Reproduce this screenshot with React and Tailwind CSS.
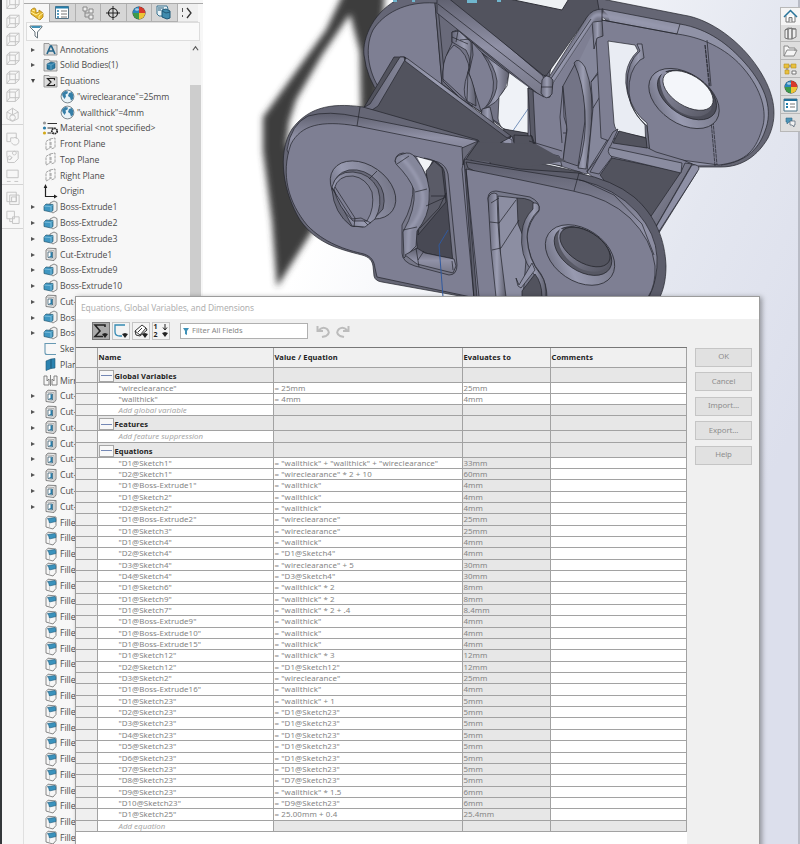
import React from "react";

const treeItems = [
  ["folderA", "Annotations", 1],
  ["folderB", "Solid Bodies(1)", 1],
  ["folderS", "Equations", 2],
  ["globe", '"wireclearance"=25mm', 0],
  ["globe", '"wallthick"=4mm', 0],
  ["material", "Material <not specified>", 0],
  ["plane", "Front Plane", 0],
  ["plane", "Top Plane", 0],
  ["plane", "Right Plane", 0],
  ["origin", "Origin", 0],
  ["boss", "Boss-Extrude1", 1],
  ["boss", "Boss-Extrude2", 1],
  ["boss", "Boss-Extrude3", 1],
  ["cut", "Cut-Extrude1", 1],
  ["boss", "Boss-Extrude9", 1],
  ["boss", "Boss-Extrude10", 1],
  ["cut", "Cut-", 1],
  ["boss", "Bos", 1],
  ["boss", "Bos", 1],
  ["sketch", "Ske", 0],
  ["refplane", "Plan", 0],
  ["mirror", "Mirr", 0],
  ...Array.from({ length: 8 }, () => ["cut", "Cut-", 1]),
  ...Array.from({ length: 21 }, () => ["fillet", "Fille", 0]),
];

const W = '= "wallthick"';
const S23 = '= "D1@Sketch23"';
const equations = [
  ["D1@Sketch1", '= "wallthick" + "wallthick" + "wireclearance"', "33mm"],
  ["D2@Sketch1", '= "wireclearance" * 2 + 10', "60mm"],
  ["D1@Boss-Extrude1", W, "4mm"],
  ["D1@Sketch2", W, "4mm"],
  ["D2@Sketch2", W, "4mm"],
  ["D1@Boss-Extrude2", '= "wireclearance"', "25mm"],
  ["D1@Sketch3", '= "wireclearance"', "25mm"],
  ["D1@Sketch4", W, "4mm"],
  ["D2@Sketch4", '= "D1@Sketch4"', "4mm"],
  ["D3@Sketch4", '= "wireclearance" + 5', "30mm"],
  ["D4@Sketch4", '= "D3@Sketch4"', "30mm"],
  ["D1@Sketch6", W + " * 2", "8mm"],
  ["D1@Sketch9", W + " * 2", "8mm"],
  ["D1@Sketch7", W + " * 2 + .4", "8.4mm"],
  ["D1@Boss-Extrude9", W, "4mm"],
  ["D1@Boss-Extrude10", W, "4mm"],
  ["D1@Boss-Extrude15", W, "4mm"],
  ["D1@Sketch12", W + " * 3", "12mm"],
  ["D2@Sketch12", '= "D1@Sketch12"', "12mm"],
  ["D3@Sketch2", '= "wireclearance"', "25mm"],
  ["D1@Boss-Extrude16", W, "4mm"],
  ["D1@Sketch23", W + " + 1", "5mm"],
  ["D2@Sketch23", S23, "5mm"],
  ["D3@Sketch23", S23, "5mm"],
  ["D4@Sketch23", S23, "5mm"],
  ["D5@Sketch23", S23, "5mm"],
  ["D6@Sketch23", S23, "5mm"],
  ["D7@Sketch23", S23, "5mm"],
  ["D8@Sketch23", '= "D7@Sketch23"', "5mm"],
  ["D9@Sketch23", W + " * 1.5", "6mm"],
  ["D10@Sketch23", '= "D9@Sketch23"', "6mm"],
  ["D1@Sketch25", "= 25.00mm + 0.4", "25.4mm"],
];

function Folder({ children }) {
  return (
    <>
      <path d="M1 3V1.500h5L7 3h7v10H1z" fill="#dcdcdc" stroke="#858585" strokeWidth=".8" />
      {children}
    </>
  );
}

function TreeIcon({ kind }) {
  let art = null;
  if (kind === "folderA")
    art = <Folder><path d="M4 12 7.400 4h1L12 12M5.500 9h5" fill="none" stroke="#24658a" strokeWidth="1.700" /></Folder>;
  if (kind === "folderB")
    art = <Folder><path d="m4 6 4-2 4 1v5l-4 2-4-1z" fill="#2c7ca5" stroke="#174e6d" strokeWidth=".6" /><path d="m4 6 4 1 4-2M8 7v5" stroke="#83bcda" strokeWidth=".6" fill="none" /></Folder>;
  if (kind === "folderS")
    art = <Folder><path d="M11.500 6.200V4.500H4.500l3.500 3.500-3.500 3.500h7V10" fill="none" stroke="#222" strokeWidth="1.200" /></Folder>;
  if (kind === "globe")
    art = (
      <>
        <circle cx="7.500" cy="7.500" r="6.400" fill="#e9f3f8" stroke="#606d75" strokeWidth=".8" />
        <path d="M2 4.500 5 2l3 .5-.5 2-2 1 .5 2-1.500 2.500L2.500 7zM9 4l3-1 1.500 3.500L13 10l-2 1.500-1-3-2-1.500z" fill="#367fa8" />
      </>
    );
  if (kind === "material")
    art = (
      <>
        <circle cx="1.500" cy="2" r="1.600" fill="#999" />
        <circle cx="1.500" cy="7" r="1.600" fill="#2b7ca8" />
        <circle cx="1.500" cy="12" r="1.600" fill="#d3a91b" />
        <path d="M4.500 2.500H14M4.500 7h6M4.500 12h4" stroke="#333" strokeWidth="1.200" />
        <circle cx="11.500" cy="10" r="2.700" fill="none" stroke="#222" strokeWidth="1.800" strokeDasharray="1.700 .7" />
      </>
    );
  if (kind === "plane")
    art = <path d="m3 4.500 4-2.500v9L3 13zM7 2l5-1v9.500L8 12M8 5v6" fill="#fafafa" stroke="#8b8b8b" strokeWidth=".8" strokeDasharray="3 .8" />;
  if (kind === "origin")
    art = (
      <>
        <path d="M2.500 2v10.500H13" fill="none" stroke="#222" strokeWidth="1.200" />
        <path d="M.7 4 2.500 0l1.800 4zM11 10.500l3.500 2-3.500 2z" fill="#222" />
      </>
    );
  if (kind === "boss")
    art = (
      <>
        <path d="m7 3 4-2 3 1.500v8L10 13l-3-2z" fill="#f0f0f0" stroke="#707070" strokeWidth=".8" />
        <path d="m1 6 2-2 7 .5v6L8 12l-7-1.500z" fill="#3f97c2" stroke="#24566f" strokeWidth=".7" />
        <path d="m1 6 7 .7 2-2.200M8 7v5" fill="none" stroke="#92c9e3" strokeWidth=".7" />
      </>
    );
  if (kind === "cut")
    art = (
      <>
        <path d="m3 3 2-1.800 8 .3v9.500l-2 2.500-8-1z" fill="#ececec" stroke="#777" strokeWidth=".9" />
        <path d="m3 3 8 .6 2-2.100M11 4v9" stroke="#999" strokeWidth=".7" fill="none" />
        <path d="M5 5h4.500v6L5 10.500z" fill="#fff" stroke="#294e62" strokeWidth=".7" />
        <path d="M7.500 5.300h1.800v5.200l-3.800-.5 2-1z" fill="#297da9" />
      </>
    );
  if (kind === "sketch")
    art = <path d="M13 1.500H2v9q0 2 2 2h9" fill="none" stroke="#6799b3" strokeWidth="1.100" />;
  if (kind === "refplane")
    art = <path d="m3 4 5-2v9.500l-5 2zM8 2l4-.5v9.500l-4 .5z" fill="#2c83b0" stroke="#1f5877" strokeWidth=".6" />;
  if (kind === "mirror")
    art = <path d="M1 3v9h5V6L4 8V3zM14 3v9H9V6l2 2V3zM7.500 2v11" fill="none" stroke="#777" strokeWidth=".9" />;
  if (kind === "fillet")
    art = (
      <>
        <path d="m3 3.500 2-2.300 8 .8v8.500L10 14l-7-2z" fill="#f6f6f6" stroke="#7c7c7c" strokeWidth=".9" />
        <path d="M4.500 3.500 12 2.500q1.200.5 1 4L6.500 8Q6 5 4.500 3.500z" fill="#3a92bd" stroke="#225a79" strokeWidth=".6" />
        <path d="M6.500 8.500v4" stroke="#bbb" strokeWidth=".7" />
      </>
    );
  return <svg className="h-[15px] w-[15px] shrink-0 overflow-visible" viewBox="0 0 15 15">{art}</svg>;
}

function LeftStrip() {
  const item = (d, i) => (
    <svg key={i} className="h-[18.700px] w-4 shrink-0" viewBox="0 0 17 17" fill="none" stroke="#c2c2c2" strokeWidth="1">
      <path d={d} />
    </svg>
  );
  return (
    <div className="flex h-[844px] w-[24px] shrink-0 border-l-2 border-[#34373a] bg-[#f7f7f7]">
      <div className="w-[22px] border-r border-[#e0e0e0]">
        <div className="-mt-[7px] flex h-[132px] flex-col items-center border-b border-[#d4d4d4]">
          {Array.from({ length: 6 }, (_, i) => item("M2 5h9v10H2zM2 5l3-3h10v9l-4 4M11 5l4-3M5 2v9h10M5 11l-3 4", i))}
          {item("M2 6l6-4 6 4v7l-6 3-6-3zM8 2v7m6-3-6 3-6-3M5 12a3 3 0 1 0 6 0 3 3 0 0 0-6 0", 8)}
        </div>
        <div className="flex h-[60px] flex-col items-center border-b border-[#d4d4d4] pt-1">
          {item("M2 3h10v6M2 3v9h4M7 13a4 4 0 1 0 2-5M9 8H6v4", 1)}
          {item("M2 6V2h12v8l-4 4H3zM5 11l3-3M5 11a2 2 0 1 0-.1 0M10 6a2 2 0 1 0-.1 0", 2)}
          {item("M2 3h12v8H2zM2 15h4m4 0h4", 3)}
        </div>
        <div className="flex h-[44px] flex-col items-center border-b border-[#d4d4d4] pt-1">
          {item("M2 2h10v10H2zM5 5h10v10H5zM7 7h5v5H7z", 1)}
          {item("M2 2h8v8H2zM8 8h7v7H8zM5 10v3h3", 2)}
        </div>
      </div>
    </div>
  );
}

function Wheel({ className }) {
  return (
    <svg className={className} viewBox="0 0 14 14">
      <circle cx="7" cy="7" r="6.500" fill="#333" />
      <path d="M7 7V.8A6.200 6.200 0 0 0 .8 7z" fill="#2985bd" />
      <path d="M7 7h6.200A6.200 6.200 0 0 0 7 .8z" fill="#d8392c" />
      <path d="M7 7v6.200A6.200 6.200 0 0 0 13.200 7z" fill="#edc437" />
      <path d="M7 7H.8A6.200 6.200 0 0 0 7 13.200z" fill="#3d9b4b" />
      <ellipse cx="5" cy="3.500" rx="2" ry="1.200" fill="#fff" opacity=".6" />
    </svg>
  );
}

function FeatureTree() {
  const tab = "flex h-[18px] w-[25.500px] items-center justify-center border-r border-b border-[#b0b0b0] bg-[#d6d6d6]";
  return (
    <div className="flex h-[844px] w-[179px] shrink-0 flex-col bg-[#f7f7f7]">
      <div className="mt-[3px] flex h-[19px] border-t border-[#aaa]">
        <div className="flex h-[19px] w-[26px] items-center justify-center border-r border-[#aaa]">
          <svg className="h-4 w-4" viewBox="0 0 16 16"><path d="M2 4q4-4 5 0v3l3-1v-2l4 3v4l-3 3-2-1-7-5z" fill="#e7b92f" stroke="#a77b13" strokeWidth=".8" /><path d="m2 6 5 3 3-2M10 13v-3l4-3M3 4l3 1" fill="none" stroke="#fff0a0" /></svg>
        </div>
        <div className={tab}>
          <svg className="h-[13px] w-[14px]" viewBox="0 0 14 13"><path d="M.5.500h13v12H.5z" fill="#fff" stroke="#527184" /><path d="M.5.500h13v2H.5z" fill="#247fac" /><path d="M2 5h2m-2 3h2m-2 3h2" stroke="#247fac" strokeWidth="1.500" /><path d="M6 5h6M6 8h6m-6 3h6" stroke="#777" /></svg>
        </div>
        <div className={tab}>
          <svg className="h-[14px] w-[14px]" viewBox="0 0 14 14" fill="#eee" stroke="#888"><path d="M2 1h4v4H2zM8 3h4v4H8zM8 9h4v4H8z" /><path d="M4 5v6h4M4 7h4" fill="none" /></svg>
        </div>
        <div className={tab}>
          <svg className="h-[14px] w-[14px]" viewBox="0 0 14 14" fill="none" stroke="#222"><circle cx="7" cy="7" r="4.500" strokeWidth="1.200" /><path d="M7 0v14M0 7h14" /></svg>
        </div>
        <div className={tab}><Wheel className="h-[14px] w-[14px]" /></div>
        <div className={tab}>
          <svg className="h-[15px] w-[16px]" viewBox="0 0 16 15"><path d="M1 1h10l1 3v7H3L1 9z" fill="#e8f3f8" stroke="#397290" /><path d="m6 5 4-1 4 2v7l-3 1-5-2z" fill="#408bad" stroke="#1d5878" /><path d="M2 3h6M2 5h3M6 6l4 2 4-1" fill="none" stroke="#235a77" /></svg>
        </div>
        <div className="flex h-[18px] w-[20px] items-center justify-center border-b border-[#ddd] bg-[#f0f0f0]">
          <svg className="h-3 w-3" viewBox="0 0 12 12"><path d="m5 1 4 5-4 5" fill="none" stroke="#333" strokeWidth="1.300" /><path d="M0 1v4m0 3v2" stroke="#222" strokeWidth="1.500" /></svg>
        </div>
      </div>
      <div className="ml-[2px] flex h-[19px] w-[174px] items-center border border-[#ddd] bg-[#fafafa] pl-0.5">
        <svg className="h-[15px] w-[14px]" viewBox="0 0 14 15"><path d="M1 2h12v1L8.500 8v6L6 12V8L1 3z" fill="#fff" stroke="#65737b" /><path d="M2 2h10l-1 2H3z" fill="#4291b5" /></svg>
      </div>
      <div className="flex h-[803px]">
        <div className="flex w-[166px] flex-col overflow-hidden pt-[.7px]">
          {treeItems.map(([kind, label, arrow], i) => (
            <div key={i} className="flex h-[15.770px] shrink-0 items-center">
              <div className="flex w-[18.500px] shrink-0 items-center pl-[6.500px]">
                {arrow === 1 && <div className="h-0 w-0 border-y-[2.500px] border-l-[4px] border-y-transparent border-l-[#555]" />}
                {arrow === 2 && <div className="h-0 w-0 border-x-[2.500px] border-t-[4px] border-x-transparent border-t-[#444]" />}
              </div>
              <div className={kind === "globe" ? "ml-[17px] flex items-center" : "flex items-center"}>
                <TreeIcon kind={kind} />
                <span className="ml-[2.500px] whitespace-nowrap pt-px font-['Open_Sans','Noto_Sans',sans-serif] text-[8.700px] leading-[15px] tracking-[-.09px] text-[#4c4c4c]">{label}</span>
              </div>
            </div>
          ))}
        </div>
        <div className="flex w-[11px] flex-col bg-[#f0f0f0]">
          <svg className="mx-auto mt-1 h-[7px] w-[7px]" viewBox="0 0 8 8"><path d="m1 6 3-4 3 4" fill="none" stroke="#555" strokeWidth="1.300" /></svg>
          <div className="mt-[33px] h-[230px] bg-[#cdcdcd]" />
        </div>
      </div>
    </div>
  );
}

const FACE = "#7e7f93";
const DARK = "#52535e";
const EDGE = "#23242b";

function Model() {
  const light = { fill: "none", stroke: "#9698ad", strokeLinecap: "round" };
  return (
    <svg className="block h-[297px] w-[597px]" viewBox="203 0 597 297">
      <defs>
        <filter id="soft" x="-20%" y="-20%" width="140%" height="140%"><feGaussianBlur stdDeviation="3.200" /></filter>
        <filter id="sheen" x="-20%" y="-20%" width="140%" height="140%"><feGaussianBlur stdDeviation="1.300" /></filter>
        <linearGradient id="rim" x1="0" y1="0" x2="0" y2="1"><stop offset="0" stopColor="#5e5f6e" /><stop offset=".5" stopColor="#9091a6" /><stop offset="1" stopColor="#777889" /></linearGradient>
        <linearGradient id="tube" x1="0" y1="0" x2="1" y2="0"><stop offset="0" stopColor="#676879" /><stop offset=".5" stopColor="#9c9eb3" /><stop offset="1" stopColor="#5d5e6c" /></linearGradient>
        <linearGradient id="bore" x1="0" y1="0" x2="1" y2="1"><stop offset="0" stopColor="#9193a8" /><stop offset=".45" stopColor="#777889" /><stop offset="1" stopColor="#555662" /></linearGradient>
        <linearGradient id="bevel" x1="0" y1="1" x2="1" y2="0"><stop offset="0" stopColor="#5f6070" /><stop offset=".35" stopColor="#989ab0" /><stop offset="1" stopColor="#6c6d7d" /></linearGradient>
      </defs>

      <path filter="url(#soft)" fill="#3c3c3c" fillRule="evenodd" d="M344-8 326 30 263 117v34l9 70 5 66 15-24 24-38 60-90 10-163zM350 14l10 38 1 58-30 2-45 36 3-26 7-22 26-45z" />

      <g stroke={EDGE} strokeWidth=".7" strokeLinejoin="round">
        <path fill="#656676" d="M401-2C374 10 362 38 364 55q3 24 16 40l20 12h65l80-10 20-99z" />
        <path fill={FACE} d="M435 3C405 1 383 14 373 30c-10 20-3 47 9 62l60-8z" />
        <path fill="#696a7a" d="m435 3 16 1 92 92-12 45-27-12-62-45z" />
        <path fill="none" d="m438 7 7 75" />

        <path fill="#737486" d="m452 32 5-2 70 57 4 56-33-20-38-25-17-17q-2-17 9-38z" />
        <path fill={FACE} d="M443 72q0-17 11-27 14 7 16 28 4 20 2 33l-29-27z" />
        <path fill={FACE} d="m472 42 10 11q14 20 11 38-3 14-12 20l-12-38 4-18z" />
        <path fill="url(#tube)" d="M482 53q18 14 27 20-1 24-24 36 13-14 12-28-2-16-15-28z" />
        <path fill="url(#tube)" d="m452 32 7-1 12 11q1 13-3 30 8 15 8 34l-9-5 1-29q5-9-2-22l-14-8z" />
        <path fill="none" d="m452 37 16 7M458 31l-2 11m12 30q-7 20-1 29m-7-61 10-1" />
        <path fill="url(#tube)" d="m482 109 8-2 4 17-13-7z" />
        <path fill="#eff2f7" stroke="none" d="m509 73 19 14 3 47-24-4q-8-3-9-10l1-23q8-7 10-24z" />
        <path fill="none" d="m509 73-2 13-8 11-1 21q1 10 8 12l25 4" />
        <path stroke="#4169a1" fill="none" d="m528 109-18 26" />
        <path fill={DARK} d="m504 129 28 5 5 16-29 8-14-8z" />

        <path fill="url(#rim)" d="M437-3h13l93 79 3 15-4 6L437 13z" />
        <path fill="none" d="m438 4 103 80" />
        <path fill={DARK} d="M447-3h160l-4 13-15 6-42 60-3-1z" />
        <path fill="#edf0f3" stroke="#303139" d="M509-1 562 10 570-3z" strokeWidth="1" />

        <path fill={FACE} d="m528 88 16 9 24-38 25-38h15l6 120-10 25-18 8-45-14-13-9z" />
        <path fill="#595a67" d="m528 88 5 2 3 60-5-6z" />
        <path fill="#85879b" stroke="none" d="m597 24 10 14 6 50 1 40-25 43 4-80-14-30z" />
        <path fill="none" d="m563 86 1 31 3 10-4 34m0-75-3 31 2 26m1-10h5l-1 14-2 14" />
        <path fill="#737486" d="m563 86 12-22q11 24 10 57l-7 45-15-5 4-31z" />
        <path fill="url(#tube)" d="M574 63q4-7 11 4 10 25 6 62l-5 40-8-1q9-28 7-57-2-29-11-48z" />
        <path fill="#85879b" d="M591 82 610 60l4 69-27 43 6-64z" />
        <path fill="none" d="m591 82 17-24m-15 50 17-28" />
        <path fill={DARK} d="m611 130 38 8 4 19-44-8z" />

        <path fill="#656674" d="m597-2 86 17c28 4 58 27 75 53 18 27 20 50 10 70-10 17-25 29-47 29h-28l-57-20 8-12 16-70-60-50z" />
        <path fill="#9092a6" d="m602 9 78 15c29 5 49 21 65 39 22 25 28 48 20 68-7 20-21 31-44 34h-25l-49-20-39-130z" stroke="none" />
        <path fill="none" d="m602 9 78 15c29 5 49 21 65 39 22 25 28 48 20 68-7 20-21 31-44 34" />
        <path fill={FACE} d="m602 20 75 14c30 4 53 18 67 35 17 20 24 43 18 60-7 25-20 33-43 36l-68-9-50-18-5-100z" />
        <path fill="#e9ecf3" d="m608 41 27 4 3 6q-10 9-12 23-2 18 9 36 6 9 12 13l1 15-29-6q-4-2-5-9z" />
        <path fill="url(#tube)" d="m637 44 5 0 2 14-4 2q-12 11-11 33 2 20 18 33l3 26-4-3-1-24q-18-18-18-41 0-22 13-33z" />
        <path fill="url(#tube)" d="m592 20 10 0 1 16-6 2-3 11q-1-15-2-29z" />
        <path fill="#77788a" d="m545 75 4 2 38-60q5-8 16-8l-1 12-9 1-40 61-3 14q-5 2-7-4z" />
        <path {...light} strokeWidth="4" filter="url(#sheen)" d="m551 82 41-63q3-5 9-4l78 15" />
        <path fill="none" d="m550 80 41-61m11-10v11l75 14m3-10-3 10m30 6 4 46" />
        <path fill="url(#tube)" d="M542 80q4-8 11 0l-1 14q-6 8-11-1z" />
        <path fill="none" d="M541 87h11" />
        <path fill="none" d="m705 45 4 41m2 34 4 46m-10-121 5 42m3 34 4 44" strokeDasharray="4 .7" />

        <ellipse cx="684" cy="98.500" rx="39" ry="25" transform="rotate(34 684 98.500)" fill="url(#bevel)" />
        <ellipse cx="687" cy="95" rx="33" ry="20" transform="rotate(34 687 95)" fill="#4d4e5a" />
        <path fill="url(#bore)" d="M660 79q1 22 20 33 20 10 31-2l2-10-50-30z" stroke="none" />
        <ellipse cx="688" cy="90.500" rx="28" ry="15.500" transform="rotate(32 688 90.500)" fill="#f4f6fa" />

        <path fill={FACE} d="m604 150 8-12 36 10 8 4 27 8 14 6 0 6-40 64-60-55-10-9z" />
        <path fill={DARK} d="m612 158 69 14-35 63-46-60z" />
        <path fill="url(#bore)" d="m681 172 4-9 7 1-45 78-8-8z" />
        <path fill="#8e90a5" d="M692 165q7-1 7 4l-43 67-7 3z" />
        <path fill="#8a8ca0" d="m605 147 7 1 70 15-1 10-71-17q-7-3-5-9z" />
        <path fill={FACE} d="m613 132 5-3-7 16q-6 7 1 12l-13 17-9-2z" />
        <path fill={DARK} d="m619 131 27 7 1 10-34-5z" />
        <path fill="#8a8ca0" d="m500 145 12-9 3 10 44 10 3 10-62-12z" />
        <path fill={DARK} d="m514 135 18 1 4 12-22-2z" />
        <path fill="#9294a9" d="m498 146 9-9 5 3v15q-14 2-14-9z" />
        <path fill="none" d="m531 135 5 18-10-2m-26-9 10 3m19-4 33 10" />
      </g>

      <g stroke={EDGE} strokeWidth=".7" strokeLinejoin="round">
        <path fill={DARK} d="M404 57 511 137l-11 6q-4 8 1 12l79 17 30 20-40 20-155-40-60-52 8-11 31-52z" />
        <path fill="url(#tube)" d="M404 57h-4l-30 47-7 4 9 2 6-4 28-48zM404 57l4 2 103 77-4 2-102-77z" />
        <path fill="#656675" d="M363 107c-35-5-56 2-71 22-16 25-8 65 8 91 16 23 38 29 62 35 7 2 10 5 11 11l1 10q1 5 8 6l100 18 12-130-16-30z" />
        <path fill="url(#rim)" d="m359 117 120 24-14 20-104-34q-34-7-52 7-14 11-16 28l-6-12q4-26 21-34 20-6 51 1z" />
        <path fill={FACE} d="M357 126c-36-6-56-1-66 18-11 31-2 59 16 81 17 18 39 25 57 29 8 3 10 7 11 14l2 9 108 23-13-90-1-52-9-11z" />
        <path fill="none" d="m360 107-3 19" />
        <path fill="#6a6b7a" d="m462 148 16-7-13 17-2 7z" />
        <path fill={DARK} d="M478 142q-7 4-12 17l60 8 40-6-30-17z" stroke="none" />
        <path fill="none" d="m478 142-12 17" />

        <path fill="#5c5d6b" d="M464 159l56 10 58 4q35 7 56 24c22 19 31 43 32 69 0 15-3 25-7 33H474z" />
        <path fill="url(#rim)" d="m466 162 57 9 57 9q35 8 57 32 19 22 20 45 1 22-8 40h-15l-17-60-149-69z" />
        <path fill={FACE} d="m466 169 55 11 52 11q36 7 57 27 22 22 25 48 1 19-7 31H477z" />
        <path fill="none" d="m464 160-2 9 12 130m-8-130 13 128M579 173l-5 18m5-11 5 1 30 14 28 29 12 31" />

        <path fill="#777889" d="M395 162q0-8 8-9l35 9q8 3 10 12l9 91q0 10-8 10l-34-9q-13-4-13-13v-28q12-20 11-41l-8-15z" />
        <path fill="#484954" d="M424 158q12 2 16 7 5 3 5 13l8 85-35-10-3-24q12-17 12-49z" />
        <path fill="#f0f2f6" stroke="none" d="m417 157 15 4-6 13z" />
        <path fill="#5a5b67" d="m434 161 8 7 4 34-28 33 3-21 8-23-3-20z" />
        <path fill="#85879b" d="M403 154q7-3 12 3 17 21 14 43 0 16-12 31l-1 15-12 12-1-26q13-23 11-42-4-12-18-26-3-8 7-10z" />
        <path {...light} strokeWidth="4" filter="url(#sheen)" d="M403 159q20 22 20 40 0 15-14 31l-1 21" />
        <path fill="none" d="m397 164 12-8m6 36 12-3m-24 41 14-3M426 206l20-9m-26 31 19-20 7-15m-15 3 15 0m-30 55 37 8" />
        <path fill="url(#rim)" d="m405 255 12-7 8 5 29 6 2 7-3 7-36-9z" />
        <path fill="none" d="m416 248 3 19m5-16-6 9m34 1 1 9" />
        <path fill="none" stroke="#30599e" strokeWidth="1" d="m448 230-9 15 4 52" />

        <ellipse cx="363" cy="190" rx="36" ry="25" transform="rotate(35 363 190)" fill="url(#bevel)" />
        <path fill="#686979" d="M332 190q2-17 17-20 16-2 28 11 10 12 6 28l-12 13-8 5-12-1q-17-13-19-36z" />
        <path fill="url(#bevel)" d="M332 187q4-16 21-15 17 1 25 17 5 16-3 30l-10 8-13-1z" />
        <path fill={FACE} d="M334 189q4-14 19-13 13 2 19 16 3 16-5 29l-14 0q-15-14-19-32z" />
        <path fill="none" d="m332 188 20 31 9-1 10 5m-36-36 20 31-1 9m15-48 8-8m-13 50 4 4" />

        <path fill="#787a8c" d="M488 198q0-7 8-7l34 6q11 5 9 14-10 10-12 25 1 23 14 38 6 10 6 25h-49z" />
        <path fill="#8c8ea2" d="m498 196 19 2 10 50-4 49h-21z" />
        <path fill="#555661" d="M517 198q17 0 19 9-11 11-13 29l-5-12z" />
        <path fill="url(#tube)" d="M488 198q3-7 9-4l1 29 2 26 6 48h-10l-5-48z" />
        <path fill="url(#tube)" d="M533 203q7-1 6 7-12 11-12 27 1 23 14 38 6 8 5 24h-4q-1-16-9-26-14-18-11-41 1-13 11-23z" />
        <path fill="none" d="m490 222 9 1 17-23m-24 50 9-2 18-28M491 203l8-5" />
        <path fill="#9193a8" d="m516 278 2 8 3 2 14-18-3-7-13 22z" />
        <path fill={DARK} d="m522 291 13-17q7 9 7 23h-20z" />
      </g>
      <g stroke={EDGE} strokeWidth=".7" strokeLinejoin="round">
        <ellipse cx="580" cy="255" rx="38" ry="26" transform="rotate(34 580 255)" fill="url(#bevel)" />
        <ellipse cx="583" cy="251" rx="32" ry="20" transform="rotate(34 583 251)" fill="#575864" />
        <path fill="url(#bore)" d="M558 236q0 19 21 32 18 8 28-1l2-10-49-29z" stroke="none" />
        <ellipse cx="585" cy="247" rx="28" ry="15.500" transform="rotate(32 585 247)" fill={DARK} />
      </g>
      <path d="M393 0h4v2h-4zM412 0h3v2h-3zM467 0h10v3h-10zM497 0h4v2h-4z" fill="#70b6ce" />
    </svg>
  );
}

function TaskPane() {
  const box = "flex h-[17.900px] w-[19px] items-center justify-center border-b border-[#b8b8b8] bg-[#dedede]";
  const ic = "h-[14px] w-[15px]";
  return (
    <div className="absolute right-0 top-[7px] w-[20px] border-l border-t border-[#b8b8b8]">
      <div className="flex h-[16.500px] w-[19px] items-center justify-center bg-[#f5f5f5]"><svg className={ic} viewBox="0 0 15 14"><path d="M3 7v6h9V7" fill="#fff" stroke="#777" /><path d="m1 8 6.500-6.500L14 8" fill="none" stroke="#28749a" strokeWidth="1.500" /><path d="M6 13V8.500h3V13" fill="#ddd" stroke="#777" /></svg></div>
      <div className={box}><svg className={ic} viewBox="0 0 15 14" fill="#eee" stroke="#777"><path d="M2 4v8l3 1V3zM5 3v10h4V2zM9 3v10l4-2V3zM2 4l3-2 8 1" /></svg></div>
      <div className={box}><svg className={ic} viewBox="0 0 15 14" fill="#f5f5f5" stroke="#888"><path d="M1 12V2h4l1 2h6v3M1 12l3-6h10l-3 6z" /></svg></div>
      <div className={box}><svg className={ic} viewBox="0 0 15 14"><path d="M1 2h5v4H1zM8 2h5v4H8zM2 8h4v4H2z" fill="#e8c13f" stroke="#b78e1d" strokeWidth=".6" /><path d="M9 9h4v3H9zM6 4h2M4 6v2" fill="#fff" stroke="#777" /></svg></div>
      <div className={box}><Wheel className="h-[14px] w-[14px]" /></div>
      <div className={box}><svg className={ic} viewBox="0 0 15 14"><path d="M1 1h13v12H1z" fill="#fff" stroke="#4d7489" /><path d="M1 1h13v2H1z" fill="#226f98" /><path d="M3 6h2M3 9h2" stroke="#247fac" strokeWidth="2" /><path d="M7 6h5M7 9h5" stroke="#777" /></svg></div>
      <div className={box}><svg className="h-[10px] w-[11px]" viewBox="0 0 11 10"><path d="M1 1h6v4H4L2 7V5H1z" fill="#4b94b7" stroke="#326a87" strokeWidth=".6" /><path d="M5 4h5v4H9v2L7 8H5z" fill="#f2f2f2" stroke="#567" strokeWidth=".7" /></svg></div>
    </div>
  );
}

const GRID = "grid grid-cols-[21.500px_176px_189px_88px_136px]";
const CELL = "overflow-hidden whitespace-nowrap border-b border-r border-[#a2a2a2] pl-px";

function Group({ title }) {
  return (
    <div className={GRID + " h-[15px]"}>
      <div className={CELL + " bg-[#efefef]"} />
      <div className={CELL + " flex items-end bg-[#e7e7e7] text-[7.500px] font-bold leading-[11px] tracking-[.12px] text-[#222]"}>
        <span className="mr-px flex h-[12px] w-[15px] items-center border border-[#a6a6a6] bg-[#f8f8f8] px-px"><span className="h-px w-full bg-[#7488b5]" /></span>
        {title}
      </div>
      <div className={CELL + " bg-[#e7e7e7]"} />
      <div className={CELL + " bg-[#e7e7e7]"} />
      <div className={CELL + " bg-[#e7e7e7]"} />
    </div>
  );
}

function Row({ name, value, result, shade }) {
  return (
    <div className={GRID + " h-[11.350px] leading-[10.500px] tracking-[.04px]"}>
      <div className={CELL + " bg-[#efefef]"} />
      <div className={CELL + " bg-white"}><span className="pl-[20px]">{'"' + name + '"'}</span></div>
      <div className={CELL + " bg-white tracking-[.1px]"}>{value}</div>
      <div className={CELL + (shade ? " bg-[#e7e7e7]" : " bg-white")}>{result}</div>
      <div className={CELL + " bg-white"} />
    </div>
  );
}

function AddRow({ text }) {
  return (
    <div className={GRID + " h-[11.200px] leading-[10.500px]"}>
      <div className={CELL + " bg-[#efefef]"} />
      <div className={CELL + " bg-white"}><span className="pl-[20px] italic text-[#a8a8a8]">{text}</span></div>
      <div className={CELL + " bg-[#e7e7e7]"} />
      <div className={CELL + " bg-[#e7e7e7]"} />
      <div className={CELL + " bg-[#e7e7e7]"} />
    </div>
  );
}

function Dialog() {
  const tool = "flex h-[18px] w-[18px] items-center justify-center border border-[#c5c5c5] bg-[#f3f3f3]";
  const head = CELL + " flex items-center bg-[#f0f0f0] text-[7.500px] font-bold text-[#222] tracking-[.13px]";
  return (
    <div className="absolute left-[75px] top-[296px] flex h-[560px] w-[685px] flex-col border border-[#9c9c9c] bg-[#f0f0f0] font-['Noto_Sans','Open_Sans',sans-serif] text-[7.900px] text-[#858585] shadow-[2px_1px_5px_rgba(0,0,0,0.35)]">
      <div className="flex h-[22px] shrink-0 items-center bg-white pl-[5px] text-[8.500px] tracking-[-.11px] text-[#b0b0b0]">Equations, Global Variables, and Dimensions</div>
      <div className="flex h-[28px] shrink-0 items-start pl-[16px] pt-[3px]">
        <div className="flex gap-[2px]">
          <div className="flex h-[18px] w-[18px] items-center justify-center border border-[#777] bg-[#aaa]">
            <svg className="h-4 w-4" viewBox="0 0 16 16"><path d="M12 4V2H2l5 6-5 5.500h8" fill="none" stroke="#222" strokeWidth="1.600" /><path d="m9 11 3-1 3 1-3 4z" fill="#222" /></svg>
          </div>
          <div className={tool}><svg className="h-4 w-4" viewBox="0 0 16 16"><path d="M12 2H2v7q0 4 5 4h2" fill="none" stroke="#348ab3" strokeWidth="1.300" /><path d="m9 11 3-1 3 1-3 4z" fill="#222" /></svg></div>
          <div className={tool}><svg className="h-4 w-4" viewBox="0 0 16 16"><path d="m2 8 7-6 4 3-6 7z" fill="#fff" stroke="#333" /><path d="m2 8 1 4 4 1 7-6-1-2M5 9l4-4" fill="none" stroke="#333" /><path d="m9 11 3-1 3 1-3 4z" fill="#222" /></svg></div>
          <div className={tool + " text-[7px] font-bold text-[#222]"}>
            <div className="flex w-[7px] flex-col"><span className="h-[8px] leading-[8px]">1</span><span className="h-[8px] leading-[8px]">2</span></div>
            <svg className="h-[14px] w-[8px]" viewBox="0 0 8 14"><path d="M4 0v5M2 3.500 4 6l2-2.500" fill="none" stroke="#222" /><path d="m1 9 3-1 3 1-3 4z" fill="#222" /></svg>
          </div>
        </div>
        <div className="ml-[10px] mt-px flex h-[16px] w-[128px] items-center border border-[#b0b0b0] bg-white pl-[2px] text-[7.500px]">
          <svg className="mr-[3px] h-[7px] w-[6px]" viewBox="0 0 6 7"><path d="M0 0h6L4 3v4L2 6V3z" fill="#3f91b7" /></svg>
          Filter All Fields
        </div>
        <svg className="ml-[8px] mt-[3px] h-[13px] w-[34px]" viewBox="0 0 34 13" fill="none" stroke="#bcbcbc" strokeWidth="2"><path d="M1.500 1v5H7M3 5q4-4 8-1 4 4-1 7l-4 1M32.500 1v5H27M31 5q-4-4-8-1-4 4 1 7l4 1" /></svg>
      </div>
      <div className="flex min-h-0 flex-1">
        <div className="flex w-[611px] flex-col border-t border-[#777] bg-white">
          <div className={GRID + " h-[19.500px]"}>
            <div className={CELL + " bg-[#f0f0f0]"} />
            <div className={head}>Name</div>
            <div className={head}>Value / Equation</div>
            <div className={head}>Evaluates to</div>
            <div className={head}>Comments</div>
          </div>
          <Group title="Global Variables" />
          <Row name="wireclearance" value="= 25mm" result="25mm" />
          <Row name="wallthick" value="= 4mm" result="4mm" />
          <AddRow text="Add global variable" />
          <Group title="Features" />
          <AddRow text="Add feature suppression" />
          <Group title="Equations" />
          {equations.map(([name, value, result]) => (
            <Row key={name} name={name} value={value} result={result} shade />
          ))}
          <AddRow text="Add equation" />
        </div>
        <div className="flex flex-col gap-[5.500px] pl-[8px] pt-[.5px] text-[7.800px] tracking-[-.1px]">
          {["OK", "Cancel", "Import...", "Export...", "Help"].map((b) => (
            <button key={b} className="flex h-[19px] w-[57px] items-center justify-center border border-[#c5c5c5] bg-[#e1e1e1] text-[#8e8e8e]">{b}</button>
          ))}
        </div>
      </div>
    </div>
  );
}

export default function App() {
  return (
    <div className="relative flex h-[844px] w-[800px] overflow-hidden bg-white">
      <LeftStrip />
      <FeatureTree />
      <div className="h-[844px] w-[597px] border-r-2 border-[#b9bcc6] bg-[linear-gradient(115deg,#ffffff_22%,#f1f3f8_40%,#e4e7f0_60%,#dcdfec_80%)]">
        <Model />
      </div>
      <TaskPane />
      <Dialog />
    </div>
  );
}
